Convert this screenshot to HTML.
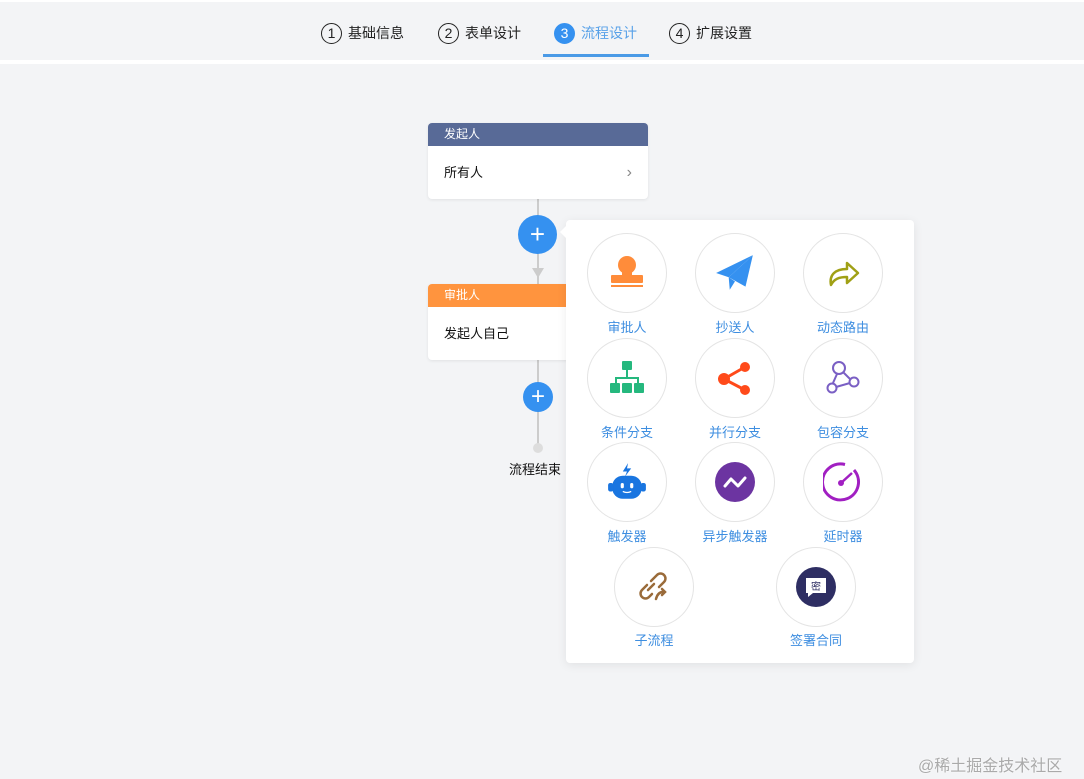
<!DOCTYPE html>
<html><head><meta charset="utf-8"><style>
body{margin:0;width:1084px;height:779px;background:#f3f4f6;font-family:"Liberation Sans","Noto Sans CJK SC",sans-serif;position:relative;overflow:hidden}
.abs{position:absolute}
.step{position:absolute;top:21px;height:24px;display:flex;align-items:center;font-size:14px;color:#222}
.step i{font-style:normal;width:21px;height:21px;border:1px solid #222;border-radius:50%;display:inline-flex;align-items:center;justify-content:center;font-size:14px;margin-right:6px;box-sizing:border-box}
.card{position:absolute;left:428px;width:220px;background:#fff;border-radius:4px;overflow:hidden;box-shadow:0 1px 3px rgba(0,0,0,.08)}
.card .h{height:23px;line-height:23px;color:#fff;font-size:12px;padding-left:16px}
.card .b{height:53px;line-height:53px;font-size:13px;padding-left:16px;color:#111}
.c{position:absolute;width:80px;height:80px;border:1px solid #e4e4e4;border-radius:50%;box-sizing:border-box;display:flex;align-items:center;justify-content:center;background:#fff}
.l{position:absolute;width:120px;text-align:center;font-size:13px;color:#3e8ee0}
.plus{position:absolute;border-radius:50%;background:#3591f0;color:#fff;display:flex;align-items:center;justify-content:center}
</style></head><body>
<div class="abs" style="left:0;top:0;width:1084px;height:60px;background:#f3f4f6;border-top:2px solid #fff;box-sizing:border-box"></div>
<div class="abs" style="left:0;top:60px;width:1084px;height:4px;background:#fff"></div>
<div class="step" style="left:321px"><i>1</i>基础信息</div>
<div class="step" style="left:438px"><i>2</i>表单设计</div>
<div class="step" style="left:554px;color:#58a1e8"><i style="background:#3591f0;border-color:#3591f0;color:#fff">3</i>流程设计</div>
<div class="step" style="left:669px"><i>4</i>扩展设置</div>
<div class="abs" style="left:543px;top:54px;width:106px;height:3px;background:#4a9ae6"></div>

<div class="abs" style="left:537px;top:199px;width:2px;height:250px;background:#ccc"></div>
<div class="abs" style="left:532px;top:268px;width:0;height:0;border-left:6px solid transparent;border-right:6px solid transparent;border-top:10px solid #ccc"></div>
<div class="card" style="top:123px"><div class="h" style="background:#586a97">发起人</div><div class="b">所有人<span style="position:absolute;right:16px;color:#888;font-size:16px">&#x203A;</span></div></div>
<div class="card" style="top:284px"><div class="h" style="background:#ff943e">审批人</div><div class="b">发起人自己</div></div>
<div class="plus" style="left:518px;top:215px;width:39px;height:39px;font-size:26px">+</div>
<div class="plus" style="left:523px;top:382px;width:30px;height:30px;font-size:24px">+</div>
<div class="abs" style="left:533px;top:443px;width:10px;height:10px;border-radius:50%;background:#ddd"></div>
<div class="abs" style="left:509px;top:459px;font-size:13px;color:#111">流程结束</div>

<div class="abs" style="left:566px;top:220px;width:348px;height:443px;background:#fff;border-radius:4px;box-shadow:0 2px 10px rgba(0,0,0,.08)"></div>
<div class="abs" style="left:560px;top:226px;width:0;height:0;border-top:6px solid transparent;border-bottom:6px solid transparent;border-right:6px solid #fff"></div>

<div class="c" style="left:587px;top:233px"><svg width="40" height="40" viewBox="0 0 40 40"><circle cx="20" cy="12" r="9" fill="#ff8c3a"/><rect x="15" y="16" width="10" height="8" fill="#ff8c3a"/><rect x="4" y="22" width="32" height="8" rx="1" fill="#ff8c3a"/><rect x="4" y="32" width="32" height="2" fill="#ff8c3a"/></svg></div>
<div class="l" style="left:567px;top:317px">审批人</div>
<div class="c" style="left:695px;top:233px"><svg width="42" height="42" viewBox="0 0 40 40"><path d="M37 3 L2 20 L14 24 Z" fill="#3591f0"/><path d="M37 3 L14 24 L30 33 Z" fill="#3591f0"/><path d="M14 24 L15 36 L20 28Z" fill="#3591f0"/></svg></div>
<div class="l" style="left:675px;top:317px">抄送人</div>
<div class="c" style="left:803px;top:233px"><svg width="40" height="40" viewBox="0 0 40 40"><path d="M8 32 C6 22 12 16 24 16 L24 10 L35 20 L24 30 L24 24 C16 24 11 26 8 32Z" fill="none" stroke="#a0a015" stroke-width="2.5" stroke-linejoin="round"/></svg></div>
<div class="l" style="left:783px;top:317px">动态路由</div>

<div class="c" style="left:587px;top:338px"><svg width="40" height="40" viewBox="0 0 40 40" fill="#25b87e"><rect x="15" y="3" width="10" height="9" rx="1"/><rect x="19" y="12" width="2" height="8"/><rect x="8" y="19" width="24" height="2"/><rect x="8" y="19" width="2" height="6"/><rect x="30" y="19" width="2" height="6"/><rect x="3" y="25" width="10" height="10" rx="1"/><rect x="15" y="25" width="10" height="10" rx="1"/><rect x="27" y="25" width="10" height="10" rx="1"/></svg></div>
<div class="l" style="left:567px;top:422px">条件分支</div>
<div class="c" style="left:695px;top:338px"><svg width="40" height="40" viewBox="0 0 40 40"><path d="M9 21 L30 9 M9 21 L30 32" stroke="#ff4a1a" stroke-width="3"/><circle cx="9" cy="21" r="6" fill="#ff4a1a"/><circle cx="30" cy="9" r="5" fill="#ff4a1a"/><circle cx="30" cy="32" r="5" fill="#ff4a1a"/></svg></div>
<div class="l" style="left:675px;top:422px">并行分支</div>
<div class="c" style="left:803px;top:338px"><svg width="40" height="40" viewBox="0 0 40 40" fill="none" stroke="#7a5fc4" stroke-width="2"><circle cx="16" cy="10" r="6"/><circle cx="31" cy="24" r="4.5"/><circle cx="9" cy="30" r="4.5"/><path d="M20 14 L27 21 M14 16 L10 25 M13 29 L27 25"/></svg></div>
<div class="l" style="left:783px;top:422px">包容分支</div>

<div class="c" style="left:587px;top:442px"><svg width="42" height="42" viewBox="0 0 40 40"><path d="M21 2 L16 10 L20 10 L18 15 L24 7 L20 7Z" fill="#1975e0"/><rect x="6" y="14" width="28" height="22" rx="10" fill="#1975e0"/><rect x="2" y="21" width="5" height="8" rx="2" fill="#1975e0"/><rect x="33" y="21" width="5" height="8" rx="2" fill="#1975e0"/><rect x="14" y="21" width="3" height="5" rx="1.5" fill="#fff"/><rect x="23" y="21" width="3" height="5" rx="1.5" fill="#fff"/><path d="M16 29 Q20 31 24 29" stroke="#fff" stroke-width="1.3" fill="none"/></svg></div>
<div class="l" style="left:567px;top:526px">触发器</div>
<div class="c" style="left:695px;top:442px"><svg width="40" height="40" viewBox="0 0 40 40"><circle cx="20" cy="20" r="20" fill="#6c34a1"/><path d="M10 24 L16 17 L23 24 L30 16" stroke="#fff" stroke-width="3" fill="none" stroke-linecap="round" stroke-linejoin="round"/></svg></div>
<div class="l" style="left:675px;top:526px">异步触发器</div>
<div class="c" style="left:803px;top:442px"><svg width="40" height="40" viewBox="0 0 40 40"><path d="M31 8 A18 18 0 1 1 22 2.5" fill="none" stroke="#a11fc2" stroke-width="3"/><path d="M18 21 L29 11" stroke="#a11fc2" stroke-width="2.5"/><circle cx="18" cy="21" r="3" fill="#a11fc2"/></svg></div>
<div class="l" style="left:783px;top:526px">延时器</div>

<div class="c" style="left:614px;top:547px"><svg width="40" height="40" viewBox="0 0 40 40" fill="none" stroke="#9a6b3a" stroke-width="2.5" stroke-linecap="round"><path d="M17 14 L23 8 A4.5 4.5 0 0 1 30 15 L25 20"/><path d="M20 17 L14 23"/><path d="M13 18 L8 23 A4.5 4.5 0 0 0 15 30 L18 27"/><path d="M22 32 Q24 24 31 25 M28 22 L31 25 L28 28"/></svg></div>
<div class="l" style="left:594px;top:630px">子流程</div>
<div class="c" style="left:776px;top:547px"><svg width="40" height="40" viewBox="0 0 40 40"><circle cx="20" cy="20" r="20" fill="#2e2e63"/><path d="M10 11 H30 V26 H17 L12 30 V26 H10Z" fill="#fff"/><text x="20" y="23" font-size="10" text-anchor="middle" fill="#2e2e63" font-family="Noto Sans CJK SC,sans-serif">密</text></svg></div>
<div class="l" style="left:756px;top:630px">签署合同</div>

<div class="abs" style="left:918px;top:752px;font-size:16px;color:#aaa;text-shadow:0 0 2px #fff">@稀土掘金技术社区</div>
</body></html>
